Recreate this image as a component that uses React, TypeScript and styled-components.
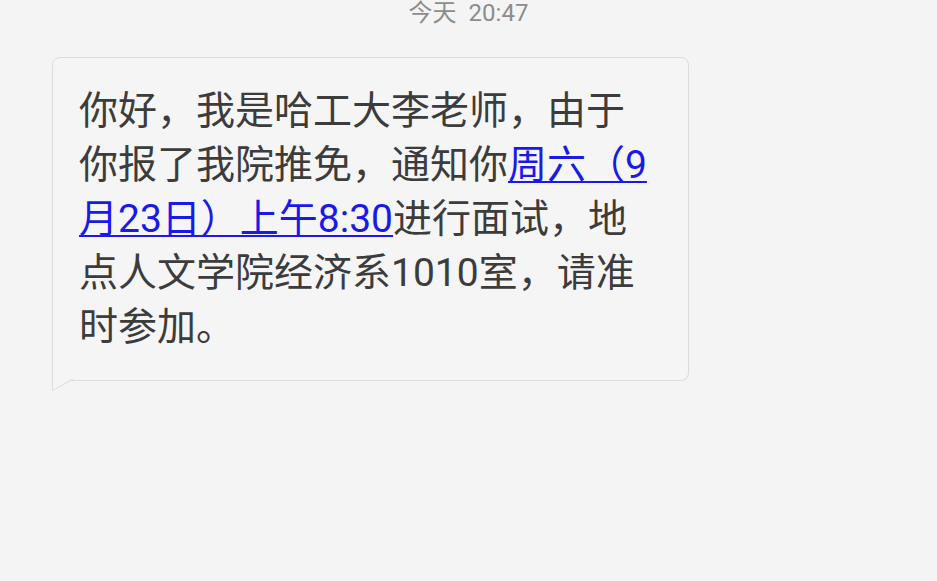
import styled, { createGlobalStyle } from 'styled-components'

const GlobalStyle = createGlobalStyle`
  html, body {
    margin: 0;
    padding: 0;
    background: #f4f4f4;
    overflow: hidden;
  }
  body {
    font-family: Roboto, "Noto Sans CJK SC", sans-serif;
  }
`

export default function App() {
  return (
    <Screen>
      <GlobalStyle />
      <TimeStamp>
        今天<Gap />20:47
      </TimeStamp>
      <Bubble>
        <Message>
          你好，我是哈工大李老师，由于
          <br />
          你报了我院推免，通知你
          <DateLink href="#">
            周六（9
            <br />
            月23日）上午8:30
          </DateLink>
          进行面试，地
          <br />
          点人文学院经济系1010室，请准
          <br />
          时参加。
        </Message>
        <Tail viewBox="0 0 22 12" aria-hidden="true">
          <path d="M0.5 0 V11.5 L21 0" fill="#f5f5f5" stroke="#dcdcdc" strokeWidth="1" />
        </Tail>
      </Bubble>
    </Screen>
  )
}

const Screen = styled.div`
  width: 937px;
  height: 581px;
  background: #f4f4f4;
  overflow: hidden;
`

const TimeStamp = styled.div`
  margin-top: -2px;
  height: 30px;
  line-height: 30px;
  font-size: 24px;
  color: #8c8c8c;
  text-align: center;
  white-space: nowrap;
`

const Gap = styled.span`
  display: inline-block;
  width: 12px;
`

const Bubble = styled.div`
  position: relative;
  box-sizing: border-box;
  margin: 29px 0 0 52px;
  width: 637px;
  height: 324px;
  padding: 26px 20px 0 26px;
  background: #f5f5f5;
  border: 1px solid #dcdcdc;
  border-radius: 8px;
  border-bottom-left-radius: 0;
`

const Message = styled.p`
  margin: 0;
  font-size: 39px;
  line-height: 54px;
  color: #3c3c3c;
  white-space: nowrap;
`

const DateLink = styled.a`
  color: #1a1ae8;
  text-decoration: underline;
  text-decoration-thickness: 2px;
  text-underline-offset: 3px;
`

const Tail = styled.svg`
  position: absolute;
  left: -1px;
  bottom: -11px;
  width: 22px;
  height: 12px;
  overflow: visible;
`
